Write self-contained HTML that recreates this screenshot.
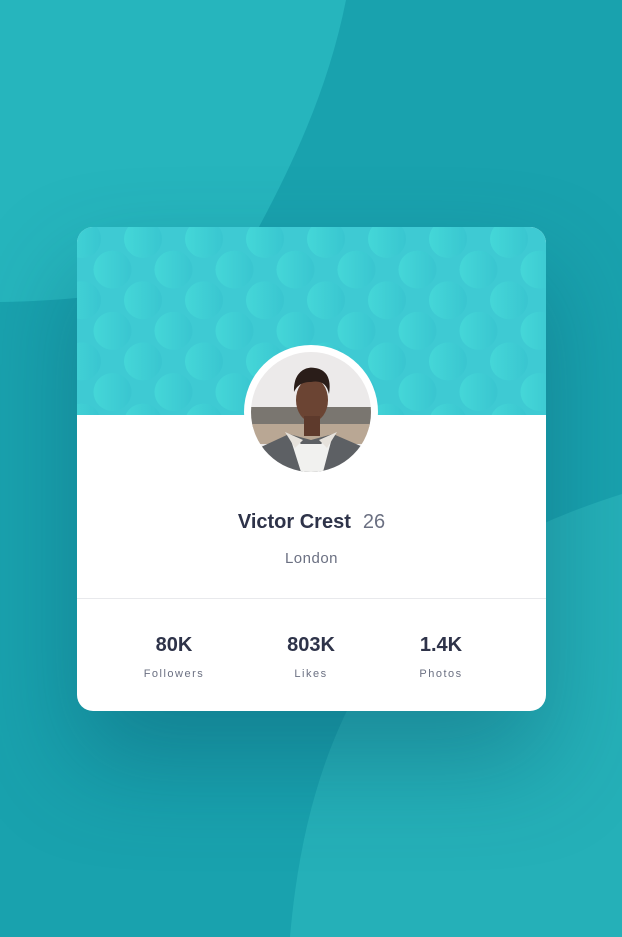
<!DOCTYPE html>
<html><head><meta charset="utf-8"><style>
*{margin:0;padding:0;box-sizing:border-box}
body{width:622px;height:937px;overflow:hidden;background:#19a2ae;position:relative;font-family:"Liberation Sans",sans-serif}
.bg{position:absolute;left:0;top:0}
.card{position:absolute;left:77px;top:227px;width:469px;height:484px;background:#fff;border-radius:16px;overflow:hidden;box-shadow:0 50px 100px rgba(8,70,94,.35)}
.hdr{position:absolute;left:0;top:0;width:469px;height:188px;background:#3ecad3}
.av{position:absolute;left:167px;top:118px;width:134px;height:134px;border-radius:50%;background:#fff}
.av svg{position:absolute;left:7px;top:7px}
.name{position:absolute;top:284px;width:100%;text-align:center;font-size:20px;font-weight:bold;color:#2e3349}
.name span{font-weight:normal;color:#6b7082;margin-left:12px}
.loc{position:absolute;top:323px;width:100%;text-align:center;font-size:15px;color:#6b7082;letter-spacing:.5px}
.hr{position:absolute;top:371px;left:0;width:100%;height:1px;background:#e8e9ec}
.st{position:absolute;top:407px;width:120px;text-align:center}
.st b{display:block;font-size:20px;color:#2e3349}
.st i{display:block;font-style:normal;font-size:11px;color:#6b7082;letter-spacing:1.5px;margin-top:11px}
</style></head><body>
<svg class="bg" width="622" height="937">
<path d="M0 0H346C330 80 300 150 260 225C230 280 120 300 0 302Z" fill="#26b5bd"/>
<path d="M622 494C540 520 450 560 390 640C330 720 300 820 290 937H622Z" fill="#25b0b8"/>
</svg>
<div class="card">
<div class="hdr"><svg width="469" height="188">
<defs><linearGradient id="g" x1="0" y1="0" x2="1" y2="0"><stop offset="0" stop-color="#4ae0dc"/><stop offset="1" stop-color="#37c3cf"/></linearGradient></defs>
<g fill="url(#g)" opacity=".6" id="cs"></g>
</svg></div>
<div class="av"><svg width="120" height="120" viewBox="0 0 120 120">
<defs><clipPath id="c"><circle cx="60" cy="60" r="60"/></clipPath></defs>
<g clip-path="url(#c)">
<rect width="120" height="120" fill="#eceaea"/>
<rect y="55" width="120" height="20" fill="#7a7670"/>
<rect y="72" width="120" height="20" fill="#b9a794"/>
<path d="M0 120L10 95L38 82L60 88L82 82L112 95L120 120Z" fill="#5d6064"/>
<path d="M38 82L50 120H72L82 82L70 92H50Z" fill="#f1f1ef"/>
<path d="M34 80L44 96L52 88Z M86 80L76 96L68 88Z" fill="#e6e2dc"/>
<ellipse cx="61" cy="48" rx="16" ry="22" fill="#6b4433"/>
<rect x="53" y="64" width="16" height="20" fill="#5e3a2c"/>
<path d="M43 40C42 20 55 14 64 16C78 18 80 30 78 42C76 32 70 28 60 30C50 30 46 34 43 40Z" fill="#2a1d19"/>
</g></svg></div>
<div class="name">Victor Crest<span>26</span></div>
<div class="loc">London</div>
<div class="hr"></div>
<div class="st" style="left:37px"><b>80K</b><i>Followers</i></div>
<div class="st" style="left:174px"><b>803K</b><i>Likes</i></div>
<div class="st" style="left:304px"><b>1.4K</b><i>Photos</i></div>
</div>
<script>
var g=document.getElementById('cs'),s='';
for(var k=0;k<8;k++)for(var j=-1;j<9;j++){var x=5+61*j+(k%2?30.5:0),y=12+30.6*k;s+='<circle cx="'+x+'" cy="'+y+'" r="19"/>';}
g.innerHTML=s;
</script>
</body></html>
